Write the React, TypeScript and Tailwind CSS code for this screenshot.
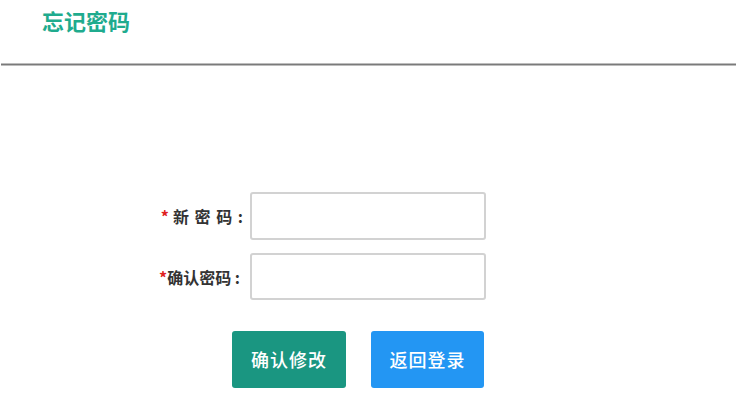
const font = { fontFamily: '"Noto Sans CJK SC", "Noto Sans", sans-serif' };

export default function App() {
  return (
    <div className="w-[742px] h-[401px] bg-white overflow-hidden" style={font}>
      <header className="h-[63px] pl-[42px] pt-[2px]">
        <h1 className="text-[22px] leading-[36px] font-semibold text-[#1fab8e]">忘记密码</h1>
      </header>
      <div className="ml-[1px] w-[735px] h-[3px] bg-[#7a7a7a] border-y border-[#bdbdbd]" />

      <form className="pt-[126px] pl-[146px]">
        <div className="flex flex-col gap-[13px]">
          <div className="flex items-center">
            <label className="w-[98px] whitespace-nowrap text-right text-[16px] font-bold text-[#333] tracking-[1px]">
              <span className="text-[#e02020] mr-[3px]">*</span>新 密 码 :
            </label>
            <input
              type="password"
              className="ml-[6px] w-[236px] h-[48px] rounded-[3px] border-2 border-[#d2d2d2] outline-none px-2"
            />
          </div>
          <div className="flex items-center">
            <label className="w-[98px] whitespace-nowrap text-right text-[16px] font-bold text-[#333] pr-[4px]">
              <span className="text-[#e02020]">*</span>确认密码 :
            </label>
            <input
              type="password"
              className="ml-[6px] w-[236px] h-[47px] rounded-[3px] border-2 border-[#d2d2d2] outline-none px-2"
            />
          </div>
        </div>

        <div className="flex gap-[25px] mt-[31px] ml-[86px]">
          <button
            type="button"
            className="w-[114px] h-[57px] rounded-[3px] bg-[#1a9681] text-white text-[18px] font-medium tracking-[1px]"
          >
            确认修改
          </button>
          <button
            type="button"
            className="w-[113px] h-[57px] rounded-[3px] bg-[#2396f3] text-white text-[18px] font-medium tracking-[1px]"
          >
            返回登录
          </button>
        </div>
      </form>
    </div>
  );
}
